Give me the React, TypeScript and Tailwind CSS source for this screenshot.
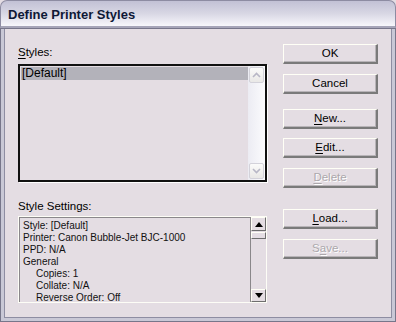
import React from "react";

const Btn = ({
  label,
  u,
  disabled,
  mt,
}: {
  label: string;
  u?: number;
  disabled?: boolean;
  mt: string;
}) => {
  const parts =
    u === undefined
      ? [label]
      : [label.slice(0, u), label[u], label.slice(u + 1)];
  return (
    <div
      className={`${mt} h-[20px] w-[95px] flex items-center justify-center border-t border-l border-t-[#fffff6] border-l-[#fffff6] border-b-2 border-r-2 border-b-[#7a7a7a] border-r-[#7a7a7a] shadow-[inset_-1px_-1px_0_#b8b4b8] text-[11.5px] leading-none ${
        disabled
          ? "text-[#aca8ac] [text-shadow:1px_1px_0_#ffffff]"
          : "text-black"
      }`}
    >
      {u === undefined ? (
        label
      ) : (
        <>
          {parts[0]}
          <span className="underline underline-offset-2">{parts[1]}</span>
          {parts[2]}
        </>
      )}
    </div>
  );
};

const settings = [
  { t: "Style: [Default]", i: false },
  { t: "Printer: Canon Bubble-Jet BJC-1000", i: false },
  { t: "PPD: N/A", i: false },
  { t: "General", i: false },
  { t: "Copies: 1", i: true },
  { t: "Collate: N/A", i: true },
  { t: "Reverse Order: Off", i: true },
];

export default function App() {
  return (
    <div className="w-[396px] h-[322px] flex flex-col bg-[#e4dde3] font-['Liberation_Sans',Arial,sans-serif] text-black overflow-hidden">
      {/* title bar */}
      <div className="h-[28px] shrink-0 rounded-t-[7px] bg-gradient-to-b from-[#c2c1d5] via-[#d8d7e4] to-[#f7f7fb] border-b-2 border-b-[#a6a5b8] border-x border-x-[#8d8ca2] border-t border-t-[#8d8ca2] flex items-center pl-[7px] pt-[2px]">
        <span className="text-[13px] font-bold text-[#0e1836] leading-none">
          Define Printer Styles
        </span>
      </div>

      {/* body */}
      <div className="flex-1 flex border-x-[4px] border-b-[4px] border-[#c9c8d6] shadow-[inset_1px_0_0_#8e8da2,inset_-1px_0_0_#8e8da2,inset_0_-1px_0_#8e8da2] outline outline-1 outline-[#77768a] -outline-offset-1">
        {/* left column */}
        <div className="pl-[14px] w-[263px] flex flex-col">
          <div className="mt-[18px] h-[13px] text-[11.5px] leading-[13px]">
            <span className="underline underline-offset-2">S</span>tyles:
          </div>
          <div className="mt-[5px] h-[118px] border-2 border-[#111111] shadow-[1px_1px_0_#ffffff] flex">
            <div className="flex-1 pt-[1px] pl-[1px]">
              <div className="h-[13px] bg-[#b3b2ba] text-[12px] leading-[13px] pl-[1px]">
                [Default]
              </div>
            </div>
            <div className="w-[17px] flex flex-col justify-between bg-gradient-to-r from-[#ececf3] to-[#fbfbfd] py-[1px]">
              <div className="h-[16px] mx-[1px] rounded-[2px] border border-[#d3d2da] bg-gradient-to-b from-[#fbfbfa] to-[#e9e8e6] flex items-center justify-center">
                <svg width="9" height="6" viewBox="0 0 9 6">
                  <path d="M1 5 L4.5 1.5 L8 5" fill="none" stroke="#b8b7c6" strokeWidth="1.6" />
                </svg>
              </div>
              <div className="h-[16px] mx-[1px] rounded-[2px] border border-[#d3d2da] bg-gradient-to-b from-[#fbfbfa] to-[#e9e8e6] flex items-center justify-center">
                <svg width="9" height="6" viewBox="0 0 9 6">
                  <path d="M1 1 L4.5 4.5 L8 1" fill="none" stroke="#b8b7c6" strokeWidth="1.6" />
                </svg>
              </div>
            </div>
          </div>

          <div className="mt-[17px] h-[15px] text-[11.5px] leading-[15px]">
            Style Settings:
          </div>
          <div className="mt-[2px] h-[87px] border border-[#fdfdf6] shadow-[inset_1px_1px_0_#8a878a] flex">
            <div className="flex-1 pl-[4px] pt-[3px] text-[10px] leading-[12px] text-[#111111]">
              {settings.map((s) => (
                <div key={s.t} className={s.i ? "pl-[13px]" : ""}>
                  {s.t}
                </div>
              ))}
            </div>
            <div className="w-[16px] flex flex-col border-l border-[#8a878a]">
              <div className="h-[14px] border-t border-l border-[#fffff6] border-b border-r border-b-[#6e6e6e] border-r-[#6e6e6e] flex items-center justify-center">
                <svg width="8" height="5" viewBox="0 0 8 5">
                  <path d="M0 5 L4 0 L8 5 Z" fill="#000" />
                </svg>
              </div>
              <div className="mt-[1px] h-[7px] border-t border-l border-[#fffff6] border-b border-r border-b-[#6e6e6e] border-r-[#6e6e6e]" />
              <div className="flex-1" />
              <div className="h-[13px] border-t border-l border-[#fffff6] border-b border-r border-b-[#6e6e6e] border-r-[#6e6e6e] flex items-center justify-center">
                <svg width="8" height="5" viewBox="0 0 8 5">
                  <path d="M0 0 L8 0 L4 5 Z" fill="#000" />
                </svg>
              </div>
            </div>
          </div>
        </div>

        {/* buttons */}
        <div className="ml-[16px] flex flex-col">
          <Btn label="OK" mt="mt-[16px]" />
          <Btn label="Cancel" mt="mt-[10px]" />
          <Btn label="New..." u={0} mt="mt-[15px]" />
          <Btn label="Edit..." u={0} mt="mt-[9px]" />
          <Btn label="Delete" u={0} disabled mt="mt-[10px]" />
          <Btn label="Load..." u={0} mt="mt-[21px]" />
          <Btn label="Save..." u={1} disabled mt="mt-[10px]" />
        </div>
      </div>
    </div>
  );
}
